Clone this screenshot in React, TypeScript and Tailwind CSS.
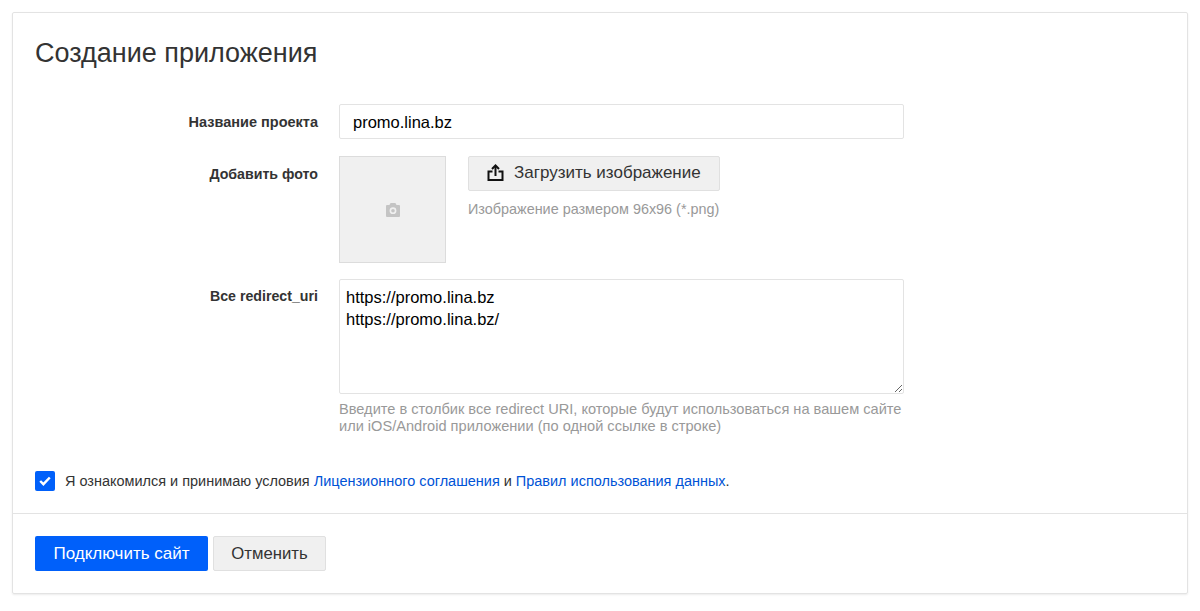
import React from 'react';

const CameraIcon = () => (
    <svg width="16" height="16" viewBox="0 0 16 16" fill="#c4c4c4">
        <path fillRule="evenodd" d="M5.600 1h4.800L11.600 3H14a1 1 0 0 1 1 1V14a1 1 0 0 1-1 1H2a1 1 0 0 1-1-1V4a1 1 0 0 1 1-1h2.400zM8 5.300a3.400 3.400 0 1 0 0 6.800 3.400 3.400 0 0 0 0-6.800z" />
        <circle cx="8" cy="8.700" r="1.800" />
    </svg>
);

const UploadIcon = () => (
    <svg width="17" height="17" viewBox="0 0 17 17" fill="none" stroke="#111" strokeWidth="2">
        <path d="M5.500 7.500H1.500V16h14V7.500H11.500" />
        <path d="M8.500 12V2" />
        <path d="M5 5L8.500 1.500 12 5" />
    </svg>
);

export default function App() {
    return (
        <div className="h-[611px] bg-white p-3 font-['Liberation_Sans',Arial,sans-serif] text-[#333]">
            <div className="h-[582px] rounded-[2px] border border-[#e3e3e3] shadow-[0_1px_2px_rgba(0,0,0,0.08)]">
                <h1 className="pl-[22px] pt-[25px] text-[27px] leading-[30px] text-[#333]">Создание приложения</h1>

                <div className="mt-[36px] flex">
                    <label className="w-[305px] pt-[10px] text-right text-[14.5px] leading-[16px] font-bold">Название проекта</label>
                    <input
                        defaultValue="promo.lina.bz"
                        className="ml-[21px] h-[35px] w-[565px] rounded-[2px] border border-[#e3e3e3] px-[13px] pt-[2px] text-[16.5px] text-black outline-none"
                    />
                </div>

                <div className="mt-[17px] flex">
                    <label className="w-[305px] pt-[10px] text-right text-[14.2px] leading-[16px] font-bold">Добавить фото</label>
                    <div className="ml-[21px] flex h-[107px] w-[107px] items-center justify-center border border-[#dcdcdc] bg-[#f0f0f0]">
                        <CameraIcon />
                    </div>
                    <div className="ml-[22px]">
                        <button className="flex h-[35px] w-[252px] items-center gap-[10px] rounded-[2px] border border-[#e0e0e0] bg-[#f0f0f0] pb-[2px] pl-[18px] text-[17px] text-[#333]">
                            <UploadIcon />
                            Загрузить изображение
                        </button>
                        <p className="mt-[10px] text-[14.4px] leading-[16px] text-[#999]">Изображение размером 96x96 (*.png)</p>
                    </div>
                </div>

                <div className="mt-[16px] flex">
                    <label className="w-[305px] pt-[9px] text-right text-[14.2px] leading-[16px] font-bold">Все redirect_uri</label>
                    <div className="ml-[21px] w-[565px]">
                        <textarea
                            defaultValue={'https://promo.lina.bz\nhttps://promo.lina.bz/'}
                            className="block h-[115px] w-[565px] rounded-[2px] border border-[#e3e3e3] px-[6px] py-[6px] text-[16.5px] leading-[22px] text-black outline-none"
                        />
                        <p className="mt-[7px] text-[14.6px] leading-[17px] text-[#999]">
                            Введите в столбик все redirect URI, которые будут использоваться на вашем сайте
                            <br />
                            или iOS/Android приложении (по одной ссылке в строке)
                        </p>
                    </div>
                </div>

                <div className="mt-[36px] flex items-center pl-[22px] text-[14.48px] leading-[20px]">
                    <span className="flex h-[20px] w-[20px] items-center justify-center rounded-[2px] bg-[#0060fa]">
                        <svg width="12" height="10" viewBox="0 0 12 10" fill="none" stroke="#fff" strokeWidth="2.400">
                            <path d="M1.200 5l3.200 3.200L10.800 1.500" />
                        </svg>
                    </span>
                    <span className="ml-[10px]">
                        Я ознакомился и принимаю условия <a className="text-[#0053d6]">Лицензионного соглашения</a> и <a className="text-[#0053d6]">Правил использования данных</a>.
                    </span>
                </div>

                <div className="mt-[22px] flex gap-[5px] border-t border-[#e3e3e3] pl-[22px] pt-[22px]">
                    <button className="h-[35px] w-[173px] rounded-[2px] bg-[#0060fa] text-[17px] text-white">Подключить сайт</button>
                    <button className="h-[35px] w-[113px] rounded-[2px] border border-[#e0e0e0] bg-[#f0f0f0] text-[16.7px] text-[#333]">Отменить</button>
                </div>
            </div>
        </div>
    );
}
